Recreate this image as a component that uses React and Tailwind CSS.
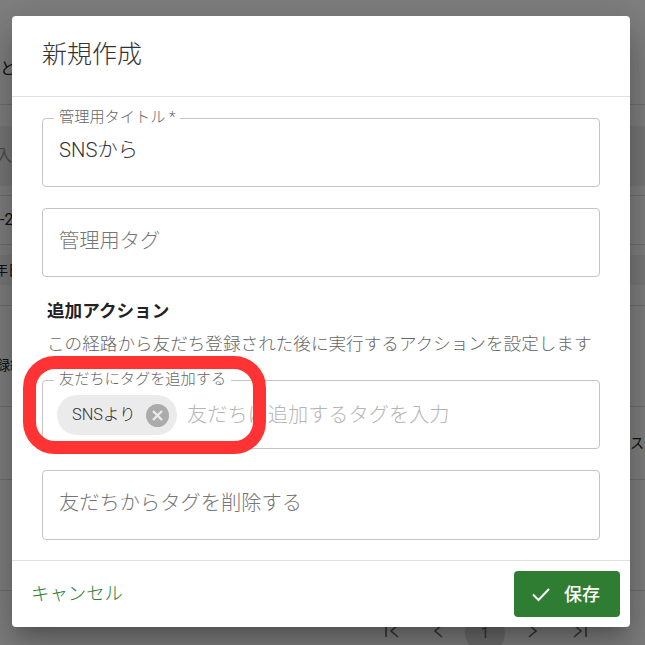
const FONT = "font-['Roboto','Noto_Sans_CJK_JP',sans-serif]";

function OutlinedField({ label, value, placeholder, className = "", children }) {
  return (
    <div className={`relative rounded border border-[#c4c4c4] ${className}`}>
      {label && (
        <span className="absolute left-[11px] top-[-10px] bg-white px-[5px] text-[15.2px] font-light leading-[16px] text-[#666666]">
          {label}
        </span>
      )}
      {children || (
        <div className={`px-[16px] text-[20.25px] font-light leading-[24px] ${value ? "pt-[19px] text-[#333333]" : "pt-[20px] text-[#757575]"}`}>
          {value || placeholder}
        </div>
      )}
    </div>
  );
}

function PageBehind() {
  return (
    <div className="flex h-[645px] w-[645px] flex-col overflow-hidden bg-white text-[16px] text-[#222222]">
      <div className="h-[105px] border-b border-[#dddddd] pt-[57px] leading-[24px]">と</div>
      <div className="h-[91px] border-b border-[#dddddd] pt-[21px]">
        <div className="flex h-[60px] items-center bg-[#eeeeee] text-[#999999]">
          <span className="ml-[-4px]">入</span>
        </div>
      </div>
      <div className="flex h-[49px] items-center border-b border-[#dddddd]">-2</div>
      <div className="h-[61px] border-b border-[#dddddd] pt-[10px]">
        <div className="flex h-[30px] items-center bg-[#f2f2f2]">
          <span className="ml-[-6px] text-[14px]">年日</span>
        </div>
      </div>
      <div className="flex h-[101px] items-center border-b border-[#dddddd] pt-[19px]">
        <span className="ml-[-4px] text-[14px]">録編</span>
      </div>
      <div className="flex h-[73px] items-center justify-end border-b border-[#dddddd]">
        <span className="mr-[-13px] text-[14px]">ス登</span>
      </div>
      <div className="h-[111px] border-b border-[#dddddd]" />
      <div className="flex h-[54px] items-start pl-[384px] pt-[22px] text-[#666666]">
        <svg width="16" height="16" viewBox="0 0 16 16" fill="none" stroke="currentColor" strokeWidth="1.6" className="mr-[32px] mt-[10px]"><path d="M2 2v12M14 2 7 8l7 6" /></svg>
        <svg width="12" height="16" viewBox="0 0 12 16" fill="none" stroke="currentColor" strokeWidth="1.6" className="mr-[21px] mt-[10px]"><path d="M10 2 3 8l7 6" /></svg>
        <span className="mr-[22px] flex h-[40px] w-[40px] shrink-0 items-center justify-center rounded-full bg-[#dddddd] text-[15px]">1</span>
        <svg width="12" height="16" viewBox="0 0 12 16" fill="none" stroke="currentColor" strokeWidth="1.6" className="mr-[33px] mt-[10px]"><path d="m2 2 7 6-7 6" /></svg>
        <svg width="16" height="16" viewBox="0 0 16 16" fill="none" stroke="currentColor" strokeWidth="1.6" className="mt-[10px]"><path d="m2 2 7 6-7 6M14 2v12" /></svg>
      </div>
    </div>
  );
}

export default function App() {
  return (
    <div className={`relative h-[645px] w-[645px] overflow-hidden ${FONT}`}>
      <PageBehind />
      <div className="absolute inset-0 bg-black/50" />

      {/* dialog */}
      <div className="absolute left-[12px] top-[16px] flex h-[611px] w-[618px] flex-col rounded bg-white shadow-[0_11px_15px_-7px_rgba(0,0,0,0.2),0_24px_38px_3px_rgba(0,0,0,0.14),0_9px_46px_8px_rgba(0,0,0,0.12)]">
        <div className="flex h-[81px] shrink-0 items-center border-b border-[#e0e0e0] px-[30px] pb-[2px] text-[25px] font-light text-[#333333]">
          新規作成
        </div>

        <div className="flex flex-1 flex-col px-[30px] pt-[21px]">
          <OutlinedField label="管理用タイトル *" value="SNSから" className="h-[69px]" />
          <OutlinedField placeholder="管理用タグ" className="mt-[21px] h-[69px]" />

          <div className="mt-[22px] pl-[5px] text-[17.6px] font-bold leading-[24px] text-[#222222]">追加アクション</div>
          <div className="mt-[9px] pl-[5px] text-[17.6px] font-light leading-[24px] text-[#666666]">
            この経路から友だち登録された後に実行するアクションを設定します
          </div>

          <OutlinedField label="友だちにタグを追加する" className="mt-[24px] h-[69px]">
            <div className="flex items-center pl-[14px] pt-[14px]">
              <div className="flex h-[40px] w-[120px] items-center rounded-full bg-[#ebebeb] pl-[15px] text-[16.4px] font-light text-[#333333]">
                SNSより
                <span className="ml-[10px] flex h-[23px] w-[23px] items-center justify-center rounded-full bg-[#ababab]">
                  <svg width="13" height="13" viewBox="0 0 13 13" fill="none" stroke="#ebebeb" strokeWidth="2.4"><path d="m2 2 9 9M11 2l-9 9" /></svg>
                </span>
              </div>
              <span className="ml-[10px] text-[20.2px] font-light text-[#b5b5b5]">友だちに追加するタグを入力</span>
            </div>
          </OutlinedField>
          <OutlinedField placeholder="友だちからタグを削除する" className="mt-[21px] h-[70px]" />
        </div>

        <div className="flex h-[67px] shrink-0 items-center justify-between border-t border-[#e0e0e0] pl-[19px] pr-[10px]">
          <span className="text-[18.4px] font-light text-[#2e7d32]">キャンセル</span>
          <button className="flex h-[46px] w-[106px] items-center justify-center gap-[12px] rounded bg-[#2e7d32] pr-[2px] text-[18px] font-medium text-white">
            <svg width="20" height="16" viewBox="0 0 20 16" fill="none" stroke="white" strokeWidth="2"><path d="m1 8.5 5.5 5.5L17 3" /></svg>
            保存
          </button>
        </div>
      </div>

      {/* red annotation */}
      <div className="absolute left-[23px] top-[356px] h-[98px] w-[243px] rounded-[32px] border-[13px] border-[#ff3333]" />
    </div>
  );
}
